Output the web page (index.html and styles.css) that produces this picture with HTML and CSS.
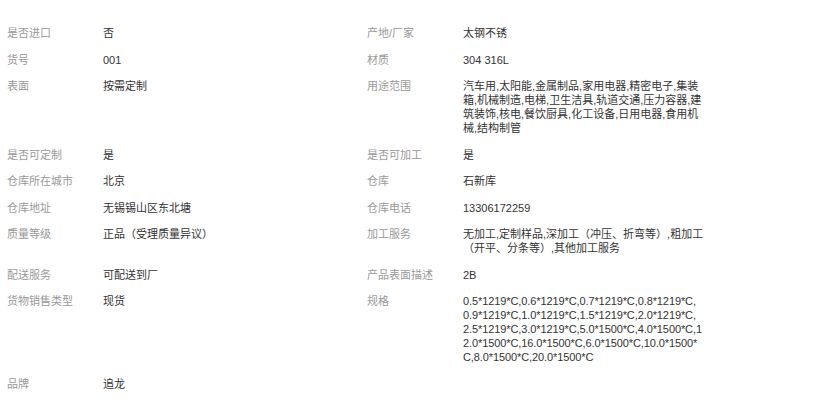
FILE: index.html
```html
<!DOCTYPE html>
<html>
    <head>
        <meta charset="utf-8">
        <title>商品参数</title>
        <link rel="stylesheet" href="styles.css">
    </head>
    <body>
        <div class="params">
            <div class="item"><span class="label">是否进口</span><span class="value">否</span></div>
            <div class="item"><span class="label">产地/厂家</span><span class="value">太钢不锈</span></div>

            <div class="item"><span class="label">货号</span><span class="value">001</span></div>
            <div class="item"><span class="label">材质</span><span class="value">304 316L</span></div>

            <div class="item"><span class="label">表面</span><span class="value">按需定制</span></div>
            <div class="item"><span class="label">用途范围</span><span class="value">汽车用,太阳能,金属制品,家用电器,精密电子,集装箱,机械制造,电梯,卫生洁具,轨道交通,压力容器,建筑装饰,核电,餐饮厨具,化工设备,日用电器,食用机械,结构制管</span></div>

            <div class="item"><span class="label">是否可定制</span><span class="value">是</span></div>
            <div class="item"><span class="label">是否可加工</span><span class="value">是</span></div>

            <div class="item"><span class="label">仓库所在城市</span><span class="value">北京</span></div>
            <div class="item"><span class="label">仓库</span><span class="value">石新库</span></div>

            <div class="item"><span class="label">仓库地址</span><span class="value">无锡锡山区东北塘</span></div>
            <div class="item"><span class="label">仓库电话</span><span class="value">13306172259</span></div>

            <div class="item"><span class="label">质量等级</span><span class="value">正品（受理质量异议）</span></div>
            <div class="item"><span class="label">加工服务</span><span class="value">无加工,定制样品,深加工（冲压、折弯等）,粗加工（开平、分条等）,其他加工服务</span></div>

            <div class="item"><span class="label">配送服务</span><span class="value">可配送到厂</span></div>
            <div class="item"><span class="label">产品表面描述</span><span class="value">2B</span></div>

            <div class="item"><span class="label">货物销售类型</span><span class="value">现货</span></div>
            <div class="item"><span class="label">规格</span><span class="value spec">0.5*1219*C,0.6*1219*C,0.7*1219*C,0.8*1219*C,<br>0.9*1219*C,1.0*1219*C,1.5*1219*C,2.0*1219*C,2.5*1219*C,3.0*1219*C,5.0*1500*C,4.0*1500*C,12.0*1500*C,16.0*1500*C,6.0*1500*C,10.0*1500*C,8.0*1500*C,20.0*1500*C</span></div>

            <div class="item"><span class="label">品牌</span><span class="value">追龙</span></div>
        </div>
    </body>
</html>
```

FILE: styles.css
```css
body {
    margin: 0;
    background: #fff;
    font-family: "Liberation Sans", "Noto Sans CJK SC", sans-serif;
    font-size: 11px;
    line-height: 14px;
}
.params {
    display: grid;
    grid-template-columns: 360px 360px;
    row-gap: 12.5px;
    padding-top: 26px;
}
.item {
    display: flex;
    align-items: flex-start;
    padding-left: 7px;
}
.label {
    flex: none;
    width: 96px;
    color: #999;
}
.value {
    width: 241px;
    color: #333;
    word-break: break-all;
}
.spec {
    letter-spacing: -0.1px;
}
```
